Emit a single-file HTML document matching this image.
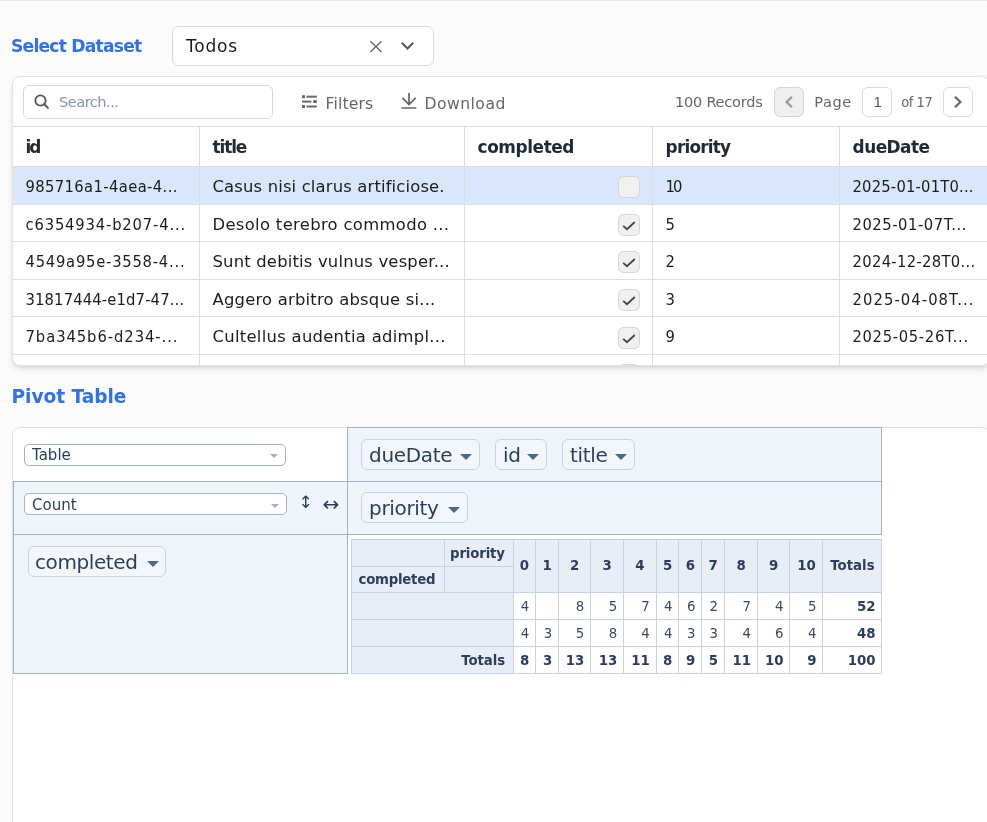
<!DOCTYPE html>
<html><head><meta charset="utf-8"><title>Pivot</title>
<style>
*{box-sizing:border-box}
html,body{margin:0;padding:0}
body{width:987px;height:822px;overflow:hidden;background:#fbfbfb;font-family:"Liberation Sans",sans-serif;color:#222;position:relative}
#w{position:absolute;left:0;top:0;width:987px;height:822px;overflow:hidden;will-change:transform}
.topline{position:absolute;left:0;top:0;width:987px;height:1px;background:#eaeaea}
.h{position:absolute;left:12px;font-weight:bold;color:#2f72ea;white-space:nowrap}
.sel{position:absolute;left:172px;top:26px;width:262px;height:40px;border:1px solid #d9d9d9;border-radius:7px;background:#fff}
.sel .v{position:absolute;left:13px;top:9px;font-size:17.7px;color:#1a1a1a;line-height:20px}
svg{position:absolute;overflow:visible}
.card{position:absolute;left:12px;top:76px;width:978px;height:289.5px;background:#fff;border:1px solid #e2e2e2;border-radius:8px;box-shadow:0 4px 7px -1px rgba(0,0,0,.11),0 2px 4px -1px rgba(0,0,0,.07);overflow:hidden}
.search{position:absolute;left:10px;top:8px;width:250px;height:34px;border:1px solid #d6d6d6;border-radius:6px}
.search .v{position:absolute;left:35px;top:7px;font-size:15px;line-height:18px;color:#8796ab}
.tb{position:absolute;color:#666;white-space:nowrap;line-height:18px}
.btn{position:absolute;top:10px;width:30px;height:30px;border:1px solid #dadada;border-radius:6px;background:#fff}
table.g{position:absolute;left:0;top:49px;border-collapse:separate;border-spacing:0;table-layout:fixed;width:1000px}
table.g th{height:41px;text-align:left;font-size:17.4px;font-weight:bold;padding:1px 0 0 12.6px;border-top:1px solid #dcdcdc;border-bottom:1px solid #dcdcdc;border-right:1px solid #dcdcdc;color:#1f2a37;white-space:nowrap}
table.g td{height:37.6px;font-size:17px;padding:3.5px 0 0 12.5px;border-bottom:1px solid #dedede;border-right:1px solid #dedede;white-space:nowrap;overflow:hidden;color:#1c1c1c}
table.g tr.s td{background:#d9e6fb}
.cb{display:block;width:22px;height:22px;border:1px solid #d6d6d6;border-radius:5.5px;background:#f0f0f0;margin-left:auto;margin-right:12px;position:relative;top:0.25px}
.pv{position:absolute;left:12px;top:427px;width:978px;height:420px;background:#fff;border:1px solid #e0e0e0;border-radius:8px 8px 0 0}
.pf{font-family:"DejaVu Sans","Liberation Sans",sans-serif;color:#2a3f5f}
.cell{position:absolute;background:#f0f4fb;border:1px solid #a2b1c6}
.dd{position:absolute;height:22px;border:1px solid #a2b1c6;border-radius:5px;background:#fff;font-size:15px;color:#2a3f5f;padding:0 7px;line-height:19px}
.attr{position:absolute;height:31px;border:1px solid #c8d4e3;border-radius:6px;background:#f3f6fa;font-size:20px;color:#2a3f5f;padding:0 0 0 7px;white-space:nowrap;line-height:30px;letter-spacing:-0.32px}
.tri{position:absolute;width:0;height:0;border-left:6px solid transparent;border-right:6px solid transparent;border-top:6.6px solid #506784;margin-top:-0.7px}
.ddi{position:absolute;width:0;height:0;border-left:4.5px solid transparent;border-right:4.5px solid transparent;border-top:4.4px solid #a2b1c6;margin-left:-0.4px}
.arr{position:absolute;font-size:17px;color:#2a3f5f;line-height:1}
table.p{position:absolute;left:338px;top:111px;border-collapse:collapse;font-size:13.33px;table-layout:fixed;width:530.5px}
table.p th{background:#e9eef6;border:1px solid #c8d4e3;font-weight:bold;padding:0 6px;color:#2a3f5f;text-align:center;white-space:nowrap}
table.p td{background:#fff;border:1px solid #c8d4e3;padding:0 6px;text-align:right;color:#3a4a63}
table.p th.c{padding-bottom:1.5px}
table.p td.t{font-weight:bold;color:#2a3f5f}
</style></head><body><div id="w">
<div class="topline"></div>
<div class="h" style="top:36px;left:11px;font-size:17.7px;line-height:20px"><span style="font-family:'DejaVu Sans',sans-serif;font-size:17.1px;letter-spacing:-0.75px;">Select Dataset</span></div>
<div class="sel"><span class="v"><span style="font-family:'DejaVu Sans',sans-serif;font-size:17px;letter-spacing:0.79px;">Todos</span></span>
 <svg width="11.8" height="11.3" style="left:197.4px;top:13.7px" viewBox="0 0 12 12" preserveAspectRatio="none"><path d="M0.3 0.3 L11.7 11.7 M11.7 0.3 L0.3 11.7" stroke="#666" stroke-width="1.3" fill="none"/></svg>
 <svg width="13" height="8" style="left:228.2px;top:15.1px" viewBox="0 0 13 8"><path d="M0.8 0.8 L6.5 6.5 L12.2 0.8" stroke="#555" stroke-width="2" fill="none"/></svg>
</div>
<div class="card">
 <div class="search"><svg width="14.8" height="14.8" style="left:10px;top:8px" viewBox="0 0 16 16"><circle cx="7" cy="7" r="5.6" fill="none" stroke="#555" stroke-width="1.9"/><path d="M11 11 L15 15" stroke="#555" stroke-width="2.2" stroke-linecap="round"/></svg><span class="v"><span style="font-family:'DejaVu Sans',sans-serif;font-size:14.6px;letter-spacing:-0.52px;">Search...</span></span></div>
 <svg width="14.8" height="13.2" style="left:289.3px;top:17.5px" viewBox="0 0 15 13.4" preserveAspectRatio="none"><g fill="#666"><rect x="0" y="0.2" width="3" height="3"/><rect x="4.5" y="0.7" width="10.5" height="2"/><rect x="0" y="5.7" width="9.5" height="2"/><rect x="11.5" y="5.2" width="3.5" height="3"/><rect x="0" y="10.2" width="3" height="3"/><rect x="4.5" y="10.7" width="10.5" height="2"/></g></svg>
 <div class="tb" style="left:312.6px;top:17.9px;font-size:16px"><span style="font-family:'DejaVu Sans',sans-serif;font-size:15.6px;letter-spacing:0.14px;">Filters</span></div>
 <svg width="16" height="17" style="left:388px;top:16px" viewBox="0 0 16 17"><path d="M8 0.1 V11.6 M1.4 4.9 L8 11.5 L14.6 4.9 M0.4 15 H15.3" stroke="#666" stroke-width="1.7" fill="none"/></svg>
 <div class="tb" style="left:411.5px;top:17.9px;font-size:16px"><span style="font-family:'DejaVu Sans',sans-serif;font-size:15.6px;letter-spacing:0.47px;">Download</span></div>
 <div class="tb" style="left:662px;top:16.4px;font-size:15px"><span style="font-family:'DejaVu Sans',sans-serif;font-size:14.5px;letter-spacing:-0.22px;">100 Records</span></div>
 <div class="btn" style="left:761px;background:#efefef;border-color:#d4d4d4"><svg width="8" height="12" style="left:10px;top:8px" viewBox="0 0 8 12"><path d="M7 0.7 L1.6 6 L7 11.3" stroke="#999" stroke-width="2.2" fill="none"/></svg></div>
 <div class="tb" style="left:801.3px;top:16.4px;font-size:15px"><span style="font-family:'DejaVu Sans',sans-serif;font-size:14.5px;letter-spacing:0.56px;">Page</span></div>
 <div class="btn" style="left:849px"><span style="position:absolute;left:10.5px;top:5px;font-size:15px;color:#555;line-height:18px">1</span></div>
 <div class="tb" style="left:888.2px;top:16.4px;font-size:15px"><span style="font-family:'DejaVu Sans Condensed',sans-serif;font-size:14.5px;letter-spacing:-0.45px;">of 17</span></div>
 <div class="btn" style="left:930px"><svg width="8" height="12" style="left:10.2px;top:8px" viewBox="0 0 8 12"><path d="M1 0.7 L6.4 6 L1 11.3" stroke="#666" stroke-width="2.2" fill="none"/></svg></div>
 <table class="g"><colgroup><col style="width:187px"><col style="width:265px"><col style="width:188px"><col style="width:187px"><col style="width:173px"></colgroup>
<tr><th><span style="font-family:'DejaVu Sans',sans-serif;font-size:16.9px;letter-spacing:-2.19px;">id</span></th><th><span style="font-family:'DejaVu Sans',sans-serif;font-size:16.9px;letter-spacing:-1.12px;">title</span></th><th><span style="font-family:'DejaVu Sans',sans-serif;font-size:16.9px;letter-spacing:-0.42px;">completed</span></th><th><span style="font-family:'DejaVu Sans',sans-serif;font-size:16.9px;letter-spacing:-0.8px;">priority</span></th><th><span style="font-family:'DejaVu Sans',sans-serif;font-size:16.9px;letter-spacing:-0.54px;">dueDate</span></th></tr>
<tr class=s><td><span style="font-family:'DejaVu Sans Condensed',sans-serif;font-size:16.4px;letter-spacing:0.39px;">985716a1-4aea-4...</span></td><td><span style="font-family:'DejaVu Sans',sans-serif;font-size:16.4px;letter-spacing:0.16px;">Casus nisi clarus artificiose.</span></td><td><i class="cb"></i></td><td><span style="font-family:'DejaVu Sans Condensed',sans-serif;font-size:16.4px;letter-spacing:-1.87px;">10</span></td><td><span style="font-family:'DejaVu Sans Condensed',sans-serif;font-size:16.4px;letter-spacing:0.21px;">2025-01-01T0...</span></td></tr>
<tr><td><span style="font-family:'DejaVu Sans Condensed',sans-serif;font-size:16.4px;letter-spacing:0.84px;">c6354934-b207-4...</span></td><td><span style="font-family:'DejaVu Sans',sans-serif;font-size:16.4px;letter-spacing:0.33px;">Desolo terebro commodo ...</span></td><td><i class="cb"><svg width="14" height="10" style="left:3.4px;top:6px" viewBox="0 0 14 10"><path d="M1.2 4.8 L4.9 8.2 L12.8 1" fill="none" stroke="#444" stroke-width="1.8" stroke-linecap="butt" stroke-linejoin="miter"/></svg></i></td><td><span style="font-family:'DejaVu Sans Condensed',sans-serif;font-size:16.4px">5</span></td><td><span style="font-family:'DejaVu Sans Condensed',sans-serif;font-size:16.4px;letter-spacing:0.55px;">2025-01-07T...</span></td></tr>
<tr><td><span style="font-family:'DejaVu Sans Condensed',sans-serif;font-size:16.4px;letter-spacing:0.77px;">4549a95e-3558-4...</span></td><td><span style="font-family:'DejaVu Sans',sans-serif;font-size:16.4px;letter-spacing:0.19px;">Sunt debitis vulnus vesper...</span></td><td><i class="cb"><svg width="14" height="10" style="left:3.4px;top:6px" viewBox="0 0 14 10"><path d="M1.2 4.8 L4.9 8.2 L12.8 1" fill="none" stroke="#444" stroke-width="1.8" stroke-linecap="butt" stroke-linejoin="miter"/></svg></i></td><td><span style="font-family:'DejaVu Sans Condensed',sans-serif;font-size:16.4px">2</span></td><td><span style="font-family:'DejaVu Sans Condensed',sans-serif;font-size:16.4px;letter-spacing:0.33px;">2024-12-28T0...</span></td></tr>
<tr><td><span style="font-family:'DejaVu Sans Condensed',sans-serif;font-size:16.4px;letter-spacing:0.16px;">31817444-e1d7-47...</span></td><td><span style="font-family:'DejaVu Sans',sans-serif;font-size:16.4px;letter-spacing:0.21px;">Aggero arbitro absque si...</span></td><td><i class="cb"><svg width="14" height="10" style="left:3.4px;top:6px" viewBox="0 0 14 10"><path d="M1.2 4.8 L4.9 8.2 L12.8 1" fill="none" stroke="#444" stroke-width="1.8" stroke-linecap="butt" stroke-linejoin="miter"/></svg></i></td><td><span style="font-family:'DejaVu Sans Condensed',sans-serif;font-size:16.4px">3</span></td><td><span style="font-family:'DejaVu Sans Condensed',sans-serif;font-size:16.4px;letter-spacing:1.09px;">2025-04-08T...</span></td></tr>
<tr><td><span style="font-family:'DejaVu Sans Condensed',sans-serif;font-size:16.4px;letter-spacing:0.95px;">7ba345b6-d234-...</span></td><td><span style="font-family:'DejaVu Sans',sans-serif;font-size:16.4px;letter-spacing:0.29px;">Cultellus audentia adimpl...</span></td><td><i class="cb"><svg width="14" height="10" style="left:3.4px;top:6px" viewBox="0 0 14 10"><path d="M1.2 4.8 L4.9 8.2 L12.8 1" fill="none" stroke="#444" stroke-width="1.8" stroke-linecap="butt" stroke-linejoin="miter"/></svg></i></td><td><span style="font-family:'DejaVu Sans Condensed',sans-serif;font-size:16.4px">9</span></td><td><span style="font-family:'DejaVu Sans Condensed',sans-serif;font-size:16.4px;letter-spacing:0.68px;">2025-05-26T...</span></td></tr>
<tr><td>&nbsp;</td><td></td><td><i class="cb"></i></td><td></td><td></td></tr>
</table>
</div>
<div class="h" style="top:384.5px;left:11.5px;font-size:19.8px;line-height:22px"><span style="font-family:'DejaVu Sans',sans-serif;font-size:18.6px;letter-spacing:-0.04px;">Pivot Table</span></div>
<div class="pv pf">
 <div class="cell" style="left:334px;top:-1px;width:535px;height:55px"></div>
 <div class="cell" style="left:0;top:53px;width:335px;height:54px"></div>
 <div class="cell" style="left:334px;top:53px;width:535px;height:54px"></div>
 <div class="cell" style="left:0;top:106px;width:335px;height:140px"></div>
 <div class="dd" style="left:11px;top:16px;width:262px;line-height:21px">Table<i class="ddi" style="left:245px;top:9.3px"></i></div>
 <div class="dd" style="left:11px;top:65px;width:263px;line-height:22.5px">Count<i class="ddi" style="left:246px;top:10px"></i></div>
 <div class="arr" style="left:285.5px;top:66px">&#8597;</div>
 <div class="arr" style="left:309.5px;top:65.5px;font-size:20px">&#8596;</div>
 <div class="attr" style="left:348px;top:11.4px;width:119px">dueDate<i class="tri" style="left:98px;top:14px"></i></div>
 <div class="attr" style="left:482px;top:11.4px;width:52px">id<i class="tri" style="left:31px;top:14px"></i></div>
 <div class="attr" style="left:549px;top:11.4px;width:73px">title<i class="tri" style="left:52px;top:14px"></i></div>
 <div class="attr" style="left:348px;top:64.4px;width:107px">priority<i class="tri" style="left:86px;top:14px"></i></div>
 <div class="attr" style="left:15px;top:118.4px;width:138px;padding-left:6px;letter-spacing:-0.4px">completed<i class="tri" style="left:118px;top:14px"></i></div>
 <table class="p">
 <colgroup><col style="width:93px"><col style="width:68.5px"><col style="width:22.7px"><col style="width:23px"><col style="width:32px"><col style="width:33px"><col style="width:32.5px"><col style="width:22.7px"><col style="width:23px"><col style="width:22.7px"><col style="width:33px"><col style="width:32.4px"><col style="width:33px"><col style="width:59px"></colgroup>
 <tr style="height:27px"><th></th><th style="text-align:left;padding-left:5px;letter-spacing:-0.15px">priority</th><th rowspan="2" class="c">0</th><th rowspan="2" class="c">1</th><th rowspan="2" class="c">2</th><th rowspan="2" class="c">3</th><th rowspan="2" class="c">4</th><th rowspan="2" class="c">5</th><th rowspan="2" class="c">6</th><th rowspan="2" class="c">7</th><th rowspan="2" class="c">8</th><th rowspan="2" class="c">9</th><th rowspan="2" class="c">10</th><th rowspan="2" class="c">Totals</th></tr>
 <tr style="height:26px"><th style="text-align:left;letter-spacing:-0.25px;padding-left:6.5px">completed</th><th></th></tr>
 <tr style="height:27px"><th colspan="2"></th><td>4</td><td></td><td>8</td><td>5</td><td>7</td><td>4</td><td>6</td><td>2</td><td>7</td><td>4</td><td>5</td><td class="t">52</td></tr>
 <tr style="height:27px"><th colspan="2"></th><td>4</td><td>3</td><td>5</td><td>8</td><td>4</td><td>4</td><td>3</td><td>3</td><td>4</td><td>6</td><td>4</td><td class="t">48</td></tr>
 <tr style="height:27px"><th colspan="2" style="text-align:right;padding-right:7.5px;letter-spacing:-0.1px">Totals</th><td class="t">8</td><td class="t">3</td><td class="t">13</td><td class="t">13</td><td class="t">11</td><td class="t">8</td><td class="t">9</td><td class="t">5</td><td class="t">11</td><td class="t">10</td><td class="t">9</td><td class="t">100</td></tr>
 </table>
</div>
</div></body></html>
